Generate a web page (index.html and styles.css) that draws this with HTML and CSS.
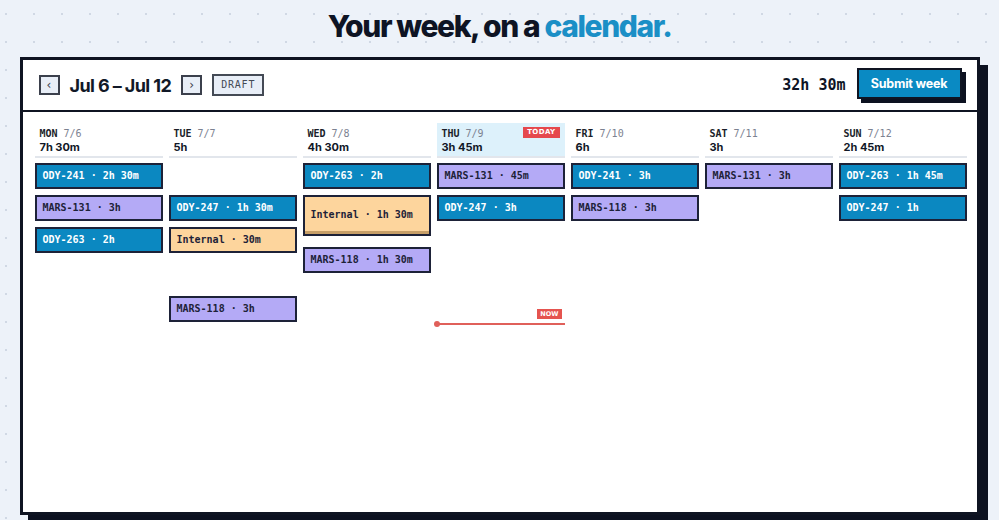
FILE: index.html
```html
<!DOCTYPE html>
<html lang="en">
<head>
    <meta charset="UTF-8">
    <meta name="viewport" content="width=device-width, initial-scale=1.0">
    <title>Timesheet - Week view</title>
    <link rel="stylesheet" href="styles.css">
</head>
<body>
    <h1 class="headline">Your week, on a <span class="accent">calendar.</span></h1>

    <div class="sheet">
        <div class="sheet-bar">
            <div class="week-nav">
                <button class="nav-btn">&lsaquo;</button>
                <span class="week-range">Jul 6 &ndash; Jul 12</span>
                <button class="nav-btn">&rsaquo;</button>
                <span class="status">DRAFT</span>
            </div>
            <div class="week-total">
                <span class="total">32h 30m</span>
                <button class="submit">Submit week</button>
            </div>
        </div>

        <div class="week">
            <div class="day">
                <div class="day-head">
                    <div class="day-name"><b>MON</b> 7/6</div>
                    <div class="day-hours">7h 30m</div>
                </div>
                <div class="entries">
                    <div class="entry ody">ODY-241 · 2h 30m</div>
                    <div class="entry mars">MARS-131 · 3h</div>
                    <div class="entry ody">ODY-263 · 2h</div>
                </div>
            </div>

            <div class="day">
                <div class="day-head">
                    <div class="day-name"><b>TUE</b> 7/7</div>
                    <div class="day-hours">5h</div>
                </div>
                <div class="entries">
                    <div class="entry ody skip-slot">ODY-247 · 1h 30m</div>
                    <div class="entry internal">Internal · 30m</div>
                    <div class="entry mars skip-gap">MARS-118 · 3h</div>
                </div>
            </div>

            <div class="day">
                <div class="day-head">
                    <div class="day-name"><b>WED</b> 7/8</div>
                    <div class="day-hours">4h 30m</div>
                </div>
                <div class="entries">
                    <div class="entry ody">ODY-263 · 2h</div>
                    <div class="entry internal tall">Internal · 1h 30m</div>
                    <div class="entry mars after-tall">MARS-118 · 1h 30m</div>
                </div>
            </div>

            <div class="day today">
                <div class="day-head">
                    <div class="day-name"><b>THU</b> 7/9</div>
                    <div class="day-hours">3h 45m</div>
                    <span class="today-tag">TODAY</span>
                </div>
                <div class="entries">
                    <div class="entry mars">MARS-131 · 45m</div>
                    <div class="entry ody">ODY-247 · 3h</div>
                </div>
                <div class="now-line">
                    <span class="now-tag">NOW</span>
                </div>
            </div>

            <div class="day">
                <div class="day-head">
                    <div class="day-name"><b>FRI</b> 7/10</div>
                    <div class="day-hours">6h</div>
                </div>
                <div class="entries">
                    <div class="entry ody">ODY-241 · 3h</div>
                    <div class="entry mars">MARS-118 · 3h</div>
                </div>
            </div>

            <div class="day">
                <div class="day-head">
                    <div class="day-name"><b>SAT</b> 7/11</div>
                    <div class="day-hours">3h</div>
                </div>
                <div class="entries">
                    <div class="entry mars">MARS-131 · 3h</div>
                </div>
            </div>

            <div class="day">
                <div class="day-head">
                    <div class="day-name"><b>SUN</b> 7/12</div>
                    <div class="day-hours">2h 45m</div>
                </div>
                <div class="entries">
                    <div class="entry ody">ODY-263 · 1h 45m</div>
                    <div class="entry ody">ODY-247 · 1h</div>
                </div>
            </div>
        </div>
    </div>
</body>
</html>
```

FILE: styles.css
```css
body {
    margin: 0;
    font-family: Inter, "Liberation Sans", sans-serif;
    color: #111827;
    background-color: #edf2f9;
    background-image: radial-gradient(circle, #d0d8e4 1px, transparent 1.4px);
    background-size: 28px 28px;
    background-position: -8px 0;
    height: 520px;
    overflow: hidden;
}
.headline {
    margin: 0;
    padding-top: 8px;
    height: 49px;
    box-sizing: border-box;
    text-align: center;
    font-size: 30px;
    font-weight: 800;
    letter-spacing: -1.4px;
    line-height: 36px;
    color: #0e1424;
}
.accent {
    color: #1b8fc6;
}
.sheet {
    width: 960px;
    height: 458px;
    margin: 8px auto 0;
    box-sizing: border-box;
    background: #fff;
    border: 3px solid #0f1422;
    box-shadow: 8px 8px 0 #0c1120;
}
.sheet-bar {
    display: flex;
    align-items: center;
    justify-content: space-between;
    padding: 0 15px 0 16px;
    border-bottom: 2px solid #0f1422;
    box-sizing: border-box;
    height: 52px;
}
.week-nav {
    display: flex;
    align-items: center;
}
.nav-btn {
    width: 21px;
    height: 20px;
    padding: 0;
    border: 2px solid #3b404c;
    background: #e8eef7;
    color: #3b404c;
    font-size: 12px;
    line-height: 14px;
    font-family: "DejaVu Sans", sans-serif;
}
.week-range {
    margin: 0 10px 0 10px;
    font-size: 18px;
    font-weight: 700;
    letter-spacing: -0.6px;
}
.status {
    margin-left: 10px;
    padding: 0 7px;
    height: 22px;
    line-height: 18px;
    box-sizing: border-box;
    border: 2px solid #444a55;
    background: #e8eef7;
    color: #444a55;
    font-family: "DejaVu Sans Mono", monospace;
    font-size: 10px;
    letter-spacing: 0.8px;
}
.week-total {
    display: flex;
    align-items: center;
    gap: 11px;
}
.total {
    font-family: "DejaVu Sans Mono", monospace;
    font-weight: 700;
    font-size: 15px;
    color: #0e1424;
}
.submit {
    width: 105px;
    height: 31px;
    margin-top: -3px;
    border: 2px solid #0f1422;
    background: #0a8ac3;
    color: #fff;
    font-family: Inter, "Liberation Sans", sans-serif;
    font-weight: 700;
    font-size: 12.5px;
    letter-spacing: -0.2px;
    box-shadow: 4px 4px 0 #0c1120;
}
.week {
    display: grid;
    grid-template-columns: repeat(7, 128px);
    column-gap: 6px;
    padding: 11px 12px 0 12px;
}
.day {
    position: relative;
}
.day-head {
    position: relative;
    height: 35px;
    padding: 4px 5px 0;
    box-sizing: border-box;
    border-bottom: 2px solid #e2e6ec;
}
.today .day-head {
    background: #ddf1fb;
}
.day-name {
    font-family: "DejaVu Sans Mono", monospace;
    font-size: 10px;
    line-height: 13px;
    color: #7c8291;
}
.day-name b {
    color: #1b1f2a;
}
.day-hours {
    font-size: 11px;
    font-weight: 700;
    line-height: 15px;
    color: #111827;
}
.today-tag {
    position: absolute;
    top: 4px;
    right: 5px;
    padding: 0 4px;
    height: 11px;
    line-height: 11px;
    background: #e5484d;
    color: #fff;
    font-family: "DejaVu Sans", sans-serif;
    font-size: 7px;
    font-weight: 700;
    letter-spacing: 0.4px;
}
.entries {
    display: flex;
    flex-direction: column;
    gap: 6px;
    padding-top: 5px;
}
.entry {
    height: 26px;
    box-sizing: border-box;
    padding: 0 6px;
    border: 2px solid #1d2238;
    line-height: 22px;
    font-family: "DejaVu Sans Mono", monospace;
    font-weight: 700;
    font-size: 10px;
    white-space: nowrap;
}
.ody {
    background: #0b88c1;
    color: #fff;
}
.mars {
    background: #b4aaf6;
    color: #1d2238;
}
.internal {
    background: #fdd59d;
    color: #1d2238;
}
.tall {
    height: 41px;
    line-height: 36px;
    box-shadow: inset 0 -3px 0 #c79f68;
}
.after-tall {
    margin-top: 5px;
}
.skip-slot {
    margin-top: 32px;
}
.skip-gap {
    margin-top: 37px;
}
.now-line {
    position: absolute;
    left: 0;
    right: 0;
    top: 200px;
    height: 2px;
    background: #e0605a;
}
.now-line::before {
    content: "";
    position: absolute;
    left: -3px;
    top: -2px;
    width: 6px;
    height: 6px;
    border-radius: 50%;
    background: #e0605a;
}
.now-tag {
    position: absolute;
    right: 3px;
    top: -14px;
    padding: 0 3px;
    height: 10px;
    line-height: 10px;
    background: #e5544f;
    color: #fff;
    font-family: "DejaVu Sans", sans-serif;
    font-size: 6.5px;
    font-weight: 700;
}
```
